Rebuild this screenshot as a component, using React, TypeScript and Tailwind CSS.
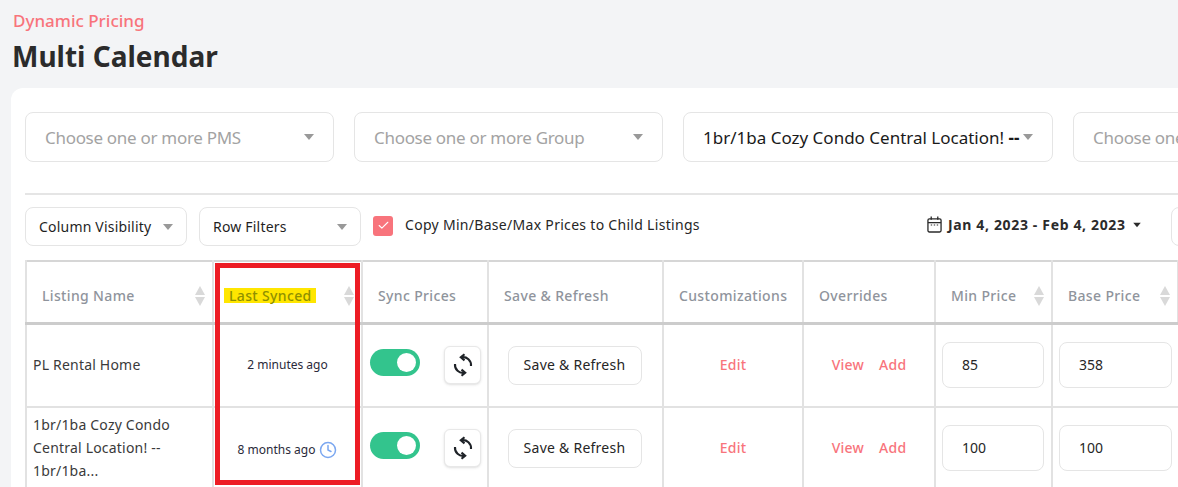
import { Check, Clock } from 'lucide-react';

function Caret({ className = 'border-t-[#999]' }: { className?: string }) {
  return <span className={`h-0 w-0 shrink-0 border-x-[5.5px] border-t-[6px] border-x-transparent ${className}`} />;
}

function SyncIcon() {
  return (
    <svg width="24" height="24" viewBox="0 0 24 24" fill="none" stroke="#1f2328" strokeWidth="2.1">
      <path d="M10.5 4.3A8 8 0 0 1 20 13" />
      <path d="M13.5 1.2L9.8 4.3L13.5 7.4" />
      <path d="M13.5 19.7A8 8 0 0 1 4 11" />
      <path d="M10.5 16.6L14.2 19.7L10.5 22.8" />
    </svg>
  );
}

function CalendarIcon() {
  return (
    <svg width="15" height="17" viewBox="0 0 16 18" fill="none" stroke="#2b2b2b" strokeWidth="1.4">
      <rect x="1" y="3" width="14" height="14" rx="1.5" />
      <path d="M1 7H15" />
      <path d="M4.5 0.5V4M11.5 0.5V4" />
      <path d="M4 9.5H5.5M7.2 9.5H8.7M10.4 9.5H11.9" strokeWidth="1.2" />
    </svg>
  );
}

function BigSelect({ label, width, filled }: { label: React.ReactNode; width: string; filled?: boolean }) {
  return (
    <div className={`flex h-[50px] shrink-0 items-center justify-between rounded-lg border border-[#e5e5e5] bg-white px-[19px] text-[17px] ${width}`}>
      <span className={`translate-y-[1px] whitespace-nowrap ${filled ? 'text-[#1a1a1a]' : 'tracking-[-0.3px] text-[#a3a3a3]'}`}>{label}</span>
      <Caret />
    </div>
  );
}

function SmallSelect({ label }: { label: string }) {
  return (
    <div className="flex h-[39px] w-[162px] shrink-0 items-center justify-between rounded-lg border border-[#e5e5e5] bg-white px-[13px] text-sm tracking-[0.2px] text-[#1f1f1f]">
      <span className="whitespace-nowrap">{label}</span>
      <Caret />
    </div>
  );
}

function SortArrows() {
  return (
    <span className="flex shrink-0 flex-col gap-[2px]">
      <span className="h-0 w-0 border-x-[5.5px] border-b-[9px] border-x-transparent border-b-[#d9d9d9]" />
      <span className="h-0 w-0 border-x-[5.5px] border-t-[9px] border-x-transparent border-t-[#d9d9d9]" />
    </span>
  );
}

function Head({ label, sort, width, mark }: { label: string; sort?: boolean; width: string; mark?: boolean }) {
  return (
    <th className={`h-[62px] border-r-2 border-[#e2e2e2] pl-[15px] pr-[7px] pt-[8px] text-left font-medium ${width}`}>
      <div className="flex items-center justify-between text-sm tracking-[0.35px] text-[#8f949c]">
        <span className={`whitespace-nowrap ${mark ? '-ml-[5px] bg-[#ffe600] pl-[5px] pr-[4px] leading-[15px] text-[#8f9000]' : ''}`}>{label}</span>
        {sort && <SortArrows />}
      </div>
    </th>
  );
}

function PriceInput({ value }: { value: string }) {
  return (
    <div className="flex h-[46px] items-center rounded-lg border border-[#e5e5e5] bg-white pl-[19px] text-sm text-[#262626]">
      {value}
    </div>
  );
}

function Row({ name, synced, min, base, clock, height }: { name: React.ReactNode; synced: string; min: string; base: string; clock?: boolean; height: string }) {
  return (
    <tr className={`border-b-2 border-[#e2e2e2] align-middle ${height}`}>
      <td className="border-r-2 border-l-2 border-[#e2e2e2] pb-[1px] pl-[6px] pr-2 text-sm leading-[23px] tracking-[0.2px] text-[#3a3a3a]">{name}</td>
      <td className="border-r-2 border-[#e2e2e2] text-center text-xs text-[#2a2a3a]">
        <div className={`flex items-center justify-center gap-[4px] ${clock ? 'pt-[3px]' : ''}`}>
          {synced}
          {clock && <Clock size={18} strokeWidth={2} className="text-[#7ba7f0]" />}
        </div>
      </td>
      <td className="border-r-2 border-[#e2e2e2]">
        <div className="flex items-center pl-[7px]">
          <span className="relative -mt-[5px] h-[27px] w-[50px] rounded-full bg-[#33c48d]">
            <span className="absolute right-[4px] top-[4px] h-[19px] w-[19px] rounded-full bg-white" />
          </span>
          <span className="ml-[24px] flex h-[38px] w-[37px] items-center justify-center rounded-md border border-[#e8e8e8] bg-white shadow-sm">
            <SyncIcon />
          </span>
        </div>
      </td>
      <td className="border-r-2 border-[#e2e2e2] pr-[2px] text-center">
        <span className="inline-flex h-[39px] w-[134px] items-center justify-center rounded-lg border border-[#e5e5e5] text-sm tracking-[0.25px] text-[#262626]">
          Save &amp; Refresh
        </span>
      </td>
      <td className="border-r-2 border-[#e2e2e2] text-center text-sm font-medium tracking-[0.2px] text-[#f8747c]">Edit</td>
      <td className="border-r-2 border-[#e2e2e2] text-sm font-medium tracking-[0.25px] text-[#f8747c]">
        <div className="flex justify-center gap-[15px]">
          <span>View</span>
          <span>Add</span>
        </div>
      </td>
      <td className="border-r-2 border-[#e2e2e2] pl-[6px] pr-[7px]">
        <PriceInput value={min} />
      </td>
      <td className="pl-[6px] pr-[6px]">
        <PriceInput value={base} />
      </td>
    </tr>
  );
}

export default function App() {
  return (
    <div className="relative h-[487px] w-[1178px] overflow-hidden bg-[#f3f4f6] font-['Noto_Sans',sans-serif]">
      <div className="pl-[13px] pt-[10px]">
        <div className="text-[17px] font-medium leading-[22px] text-[#f8747c]">Dynamic Pricing</div>
        <h1 className="-ml-[1px] mt-[6px] text-[28px] font-bold leading-[36px] text-[#2b2b2b]">Multi Calendar</h1>
      </div>

      <div className="ml-[11px] mt-[14px] h-[400px] w-[1300px] rounded-t-xl bg-white pl-[14px] pt-[24px]">
        {/* Filters */}
        <div className="flex gap-5">
          <BigSelect label="Choose one or more PMS" width="w-[309px]" />
          <BigSelect label="Choose one or more Group" width="w-[309px]" />
          <BigSelect
            label={
              <>
                1br/1ba Cozy Condo Central Location! <b>--</b>
              </>
            }
            width="w-[370px]"
            filled
          />
          <BigSelect label="Choose one or more Tags" width="w-[300px]" />
        </div>
        <div className="mt-[31px] h-[2px] bg-[#e5e5e5]" />

        {/* Toolbar */}
        <div className="mt-[12px] flex items-center">
          <SmallSelect label="Column Visibility" />
          <div className="ml-3">
            <SmallSelect label="Row Filters" />
          </div>
          <span className="ml-3 flex h-[20px] w-[20px] -translate-y-[1px] items-center justify-center rounded-[3px] bg-[#f8747c]">
            <Check size={13} strokeWidth={2} className="text-white" />
          </span>
          <span className="ml-[12px] w-[296px] -translate-y-[2px] whitespace-nowrap text-sm tracking-[0.3px] text-[#262626]">
            Copy Min/Base/Max Prices to Child Listings
          </span>
          <div className="ml-[226px] flex shrink-0 -translate-y-[2px] items-center gap-[6px]">
            <CalendarIcon />
            <span className="whitespace-nowrap text-sm font-bold tracking-[0.65px] text-[#2b2b2b]">Jan 4, 2023 - Feb 4, 2023</span>
            <Caret className="scale-75 border-t-[#2b2b2b]" />
          </div>
          <div className="ml-[29px] h-[39px] w-[80px] shrink-0 rounded-lg border border-[#e5e5e5]" />
        </div>

        {/* Table */}
        <table className="mt-[14px] w-[1152px] table-fixed border-collapse border-t-2 border-[#d6d6d6]">
          <thead>
            <tr className="border-b-[3px] border-[#cccccc]">
              <Head label="Listing Name" sort width="w-[187px] border-l-2" />
              <Head label="Last Synced" sort mark width="w-[149px]" />
              <Head label="Sync Prices" width="w-[126px]" />
              <Head label="Save & Refresh" width="w-[175px]" />
              <Head label="Customizations" width="w-[140px]" />
              <Head label="Overrides" width="w-[132px]" />
              <Head label="Min Price" sort width="w-[117px]" />
              <Head label="Base Price" sort width="w-[126px]" />
            </tr>
          </thead>
          <tbody>
            <Row height="h-[84px]" name="PL Rental Home" synced="2 minutes ago" min="85" base="358" />
            <Row
              height="h-[82px]"
              name={
                <>
                  1br/1ba Cozy Condo
                  <br />
                  Central Location! --
                  <br />
                  1br/1ba...
                </>
              }
              synced="8 months ago"
              min="100"
              base="100"
              clock
            />
          </tbody>
        </table>
      </div>

      {/* Annotation drawn over the screenshot */}
      <div className="absolute left-[215px] top-[263px] h-[222px] w-[145px] border-[5px] border-[#ed1c24]" />
    </div>
  );
}
